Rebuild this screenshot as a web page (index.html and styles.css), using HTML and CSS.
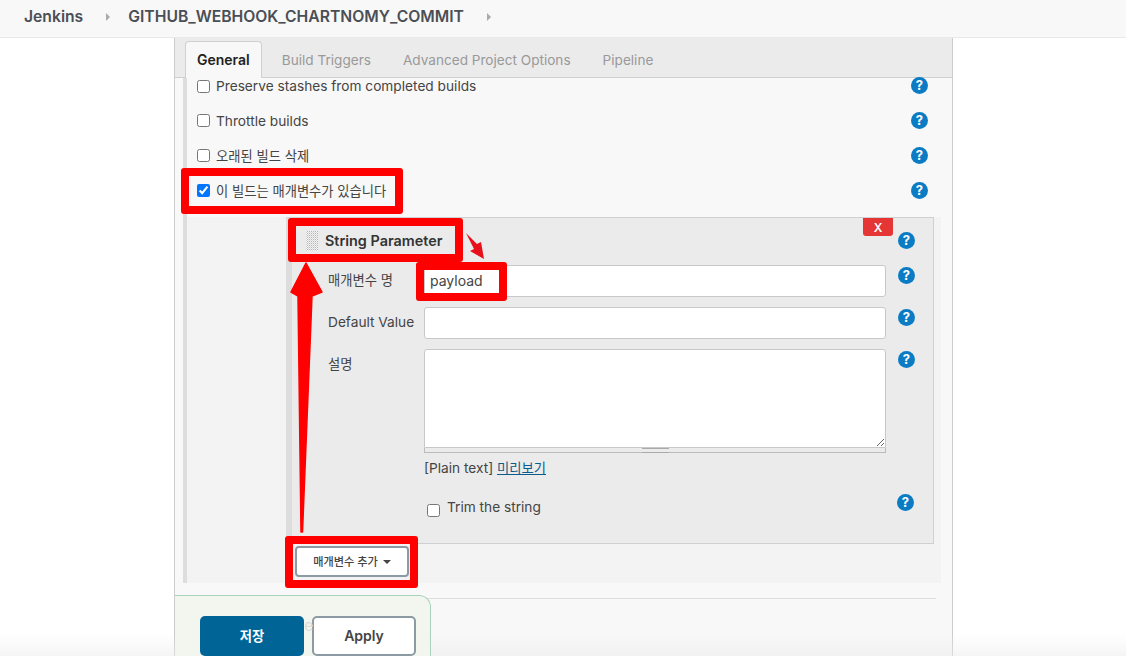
FILE: index.html
```html
<!DOCTYPE html>
<html lang="ko">
<head>
    <meta charset="UTF-8">
    <meta name="viewport" content="width=device-width, initial-scale=1.0">
    <title>GITHUB_WEBHOOK_CHARTNOMY_COMMIT Config</title>
    <link rel="stylesheet" href="styles.css">
</head>
<body>
    <header class="breadcrumb">
        <a class="crumb">Jenkins</a>
        <span class="crumb-arrow"></span>
        <a class="crumb">GITHUB_WEBHOOK_CHARTNOMY_COMMIT</a>
        <span class="crumb-arrow"></span>
    </header>

    <main class="panel">
        <nav class="tabs">
            <a class="tab active">General</a>
            <a class="tab">Build Triggers</a>
            <a class="tab">Advanced Project Options</a>
            <a class="tab">Pipeline</a>
        </nav>

        <section class="general">
            <div class="option">
                <label><input type="checkbox"> Preserve stashes from completed builds</label>
                <span class="help">?</span>
            </div>
            <div class="option">
                <label><input type="checkbox"> Throttle builds</label>
                <span class="help">?</span>
            </div>
            <div class="option">
                <label class="ko"><input type="checkbox"> 오래된 빌드 삭제</label>
                <span class="help">?</span>
            </div>
            <div class="option">
                <label class="ko"><input type="checkbox" checked> 이 빌드는 매개변수가 있습니다</label>
                <span class="help">?</span>
            </div>

            <div class="params">
                <div class="param-card">
                    <button class="delete" type="button">X</button>
                    <div class="param-head">
                        <span class="grip"></span>
                        <b>String Parameter</b>
                        <span class="help">?</span>
                    </div>
                    <div class="field">
                        <span class="field-label ko">매개변수 명</span>
                        <input class="text-input" type="text" value="payload">
                        <span class="help">?</span>
                    </div>
                    <div class="field">
                        <span class="field-label">Default Value</span>
                        <input class="text-input" type="text">
                        <span class="help">?</span>
                    </div>
                    <div class="field field-area">
                        <span class="field-label ko">설명</span>
                        <div class="area-wrap">
                            <textarea class="text-area"></textarea>
                            <div class="grippie"></div>
                        </div>
                        <span class="help">?</span>
                    </div>
                    <div class="preview">[Plain text] <a class="ko" href="#">미리보기</a></div>
                    <div class="trim">
                        <label><input type="checkbox"> Trim the string</label>
                        <span class="help">?</span>
                    </div>
                </div>
                <button class="add-param" type="button">매개변수 추가 <span class="caret"></span></button>
            </div>
        </section>

        <hr class="rule">

        <div class="actions">
            <button class="btn btn-save ko" type="button">저장</button>
            <button class="btn btn-apply" type="button">Apply</button>
        </div>
    </main>

    <!-- text showing through from behind the sticky bar -->
    <span class="ghost">e</span>

    <!-- annotations drawn on top of the screenshot -->
    <div class="mark mark-check"></div>
    <div class="mark mark-head"></div>
    <div class="mark mark-name"></div>
    <div class="mark mark-add"></div>
    <svg class="arrows" width="1126" height="656" viewBox="0 0 1126 656">
        <path d="M306 263 L322 292 L312 296 L302.5 532 L301 532 L298 296 L291 292 Z" fill="#f00" stroke="#f00" stroke-width="1.5" stroke-linejoin="round"/>
        <path d="M466 233 L477 244 L481 242 L484 259 L470 251 L474 249 Z" fill="#e8101a"/>
    </svg>
    <div class="page-fade"></div>
</body>
</html>
```

FILE: styles.css
```css
* {
    box-sizing: border-box;
}

html,
body {
    height: 656px;
    overflow: hidden;
}

body {
    position: relative;
    margin: 0;
    background: #fff;
    color: #333;
    font-family: Inter, "Noto Sans CJK KR", sans-serif;
    font-size: 13.7px;
}

.ko {
    font-size: 13.3px;
}

.breadcrumb {
    display: flex;
    align-items: center;
    height: 38px;
    padding: 0 0 4px 24px;
    background: #f8f8f8;
    border-bottom: 1px solid #e9e9e9;
}

.crumb {
    color: #4a4f55;
    font-weight: 600;
    font-size: 15.7px;
}

.crumb-arrow {
    width: 0;
    height: 0;
    margin: 0 18px 0 23px;
    border-left: 4px solid #aaa;
    border-top: 4px solid transparent;
    border-bottom: 4px solid transparent;
}

.panel {
    display: flex;
    flex-direction: column;
    width: 779px;
    height: 618px;
    margin-left: 174px;
    background: #f8f8f8;
    border-left: 1px solid #ccc;
    border-right: 1px solid #ccc;
}

.tabs {
    display: flex;
    flex: none;
    height: 40px;
    padding: 3px 0 0 10px;
    background: #ebebeb;
    border-bottom: 1px solid #d0d0d0;
}

.tab {
    height: 37px;
    padding: 11px 11px 0;
    margin-right: 10px;
    color: #999;
    font-size: 13.6px;
}

.tab.active {
    height: 37px;
    margin-right: 9px;
    padding-top: 9px;
    color: #222;
    font-size: 14px;
    font-weight: 600;
    background: #f8f8f8;
    border: 1px solid #d0d0d0;
    border-bottom: none;
    border-radius: 4px 4px 0 0;
}

.general {
    flex: none;
    width: 766px;
    height: 505px;
    margin-left: 8px;
    padding-left: 10px;
    border-left: 4px solid #ddd;
}

.option {
    display: flex;
    align-items: center;
    justify-content: space-between;
    width: 731px;
    height: 35px;
}

.option:first-child {
    height: 16px;
}

.option:first-child .help {
    margin-top: -2px;
}

.option:nth-child(2) {
    margin-top: 9px;
}

label {
    display: flex;
    align-items: center;
    gap: 6px;
    color: #444;
}

input[type="checkbox"] {
    width: 13px;
    height: 13px;
    margin: 0;
}

.help {
    display: inline-block;
    flex: none;
    width: 17px;
    height: 17px;
    color: #fff;
    background: #0b7cc4;
    border-radius: 50%;
    font-size: 13px;
    font-weight: 700;
    line-height: 17px;
    text-align: center;
}

.params {
    width: 754px;
    height: 366px;
    margin: 9px 0 0 -10px;
    padding: 0 7px 0 99px;
    background: #f3f3f3;
}

.param-card {
    position: relative;
    width: 648px;
    height: 327px;
    padding-left: 36px;
    background: #ebebeb;
    border: 1px solid #d0d0d0;
    border-left: 6px solid #ddd;
}

.delete {
    position: absolute;
    top: 0;
    right: 40px;
    width: 30px;
    height: 18px;
    padding: 0;
    color: #fff;
    background: #e53535;
    border: none;
    border-radius: 0 0 3px 3px;
    font-family: inherit;
    font-size: 12px;
    font-weight: 600;
}

.param-head {
    display: flex;
    align-items: center;
    height: 45px;
    margin-bottom: 2px;
    margin-left: -22px;
    padding-right: 18px;
}

.param-head b {
    flex: 1;
    margin-left: 7px;
    color: #333;
    font-weight: 600;
    font-size: 14.4px;
}

.grip {
    width: 12px;
    height: 20px;
    background: conic-gradient(#b4b4b4 25%, #f4f4f4 0 50%, #d8d8d8 0 75%, #f4f4f4 0) 0 0 / 2px 2px;
}

.field {
    display: flex;
    align-items: flex-start;
    height: 42px;
}

.field-label {
    width: 96px;
    padding-top: 7px;
    color: #444;
    line-height: 17px;
}

.text-input {
    width: 462px;
    height: 32px;
    padding: 0 5px 2px;
    color: #444;
    background: #fff;
    border: 1px solid #c8c8c8;
    border-radius: 3px;
    font-family: inherit;
    font-size: 14px;
}

.field .help {
    margin: 2px 0 0 12px;
}

.field-area {
    height: 104px;
}

.area-wrap {
    width: 462px;
}

.text-area {
    display: block;
    width: 462px;
    height: 99px;
    background: #fff;
    border: 1px solid #c8c8c8;
    border-radius: 3px 3px 0 0;
    font-family: inherit;
}

.grippie {
    position: relative;
    height: 5px;
    background: #ebebeb;
    border: 1px solid #bbb;
    border-top: none;
}

.grippie::after {
    content: "";
    position: absolute;
    top: 0;
    left: 217px;
    width: 27px;
    height: 3px;
    border-top: 1px solid #aaa;
    border-bottom: 1px solid #aaa;
}

.preview {
    margin: 5px 0 0 96px;
    color: #444;
}

.preview a {
    color: #0b5c8c;
}

.trim {
    display: flex;
    align-items: center;
    justify-content: space-between;
    height: 24px;
    margin: 18px 0 0 99px;
    padding-right: 19px;
}

.trim label {
    gap: 7px;
}

.trim .help {
    margin-top: -10px;
}

.trim input {
    margin-top: 6px;
}

.add-param {
    display: block;
    width: 114px;
    height: 31px;
    margin: 2px 0 0 9px;
    padding-bottom: 2px;
    color: #444;
    background: #fff;
    border: 2px solid #8c9aa3;
    border-radius: 4px;
    font-family: inherit;
    font-size: 11.2px;
    font-weight: 500;
}

.caret {
    display: inline-block;
    margin: 0 0 2px 2px;
    border-top: 4px solid #444;
    border-left: 4px solid transparent;
    border-right: 4px solid transparent;
}

.rule {
    flex: none;
    width: 749px;
    height: 1px;
    margin: 15px 0 0 12px;
    background: #ddd;
    border: none;
}

.actions {
    display: flex;
    gap: 8px;
    width: 256px;
    height: 70px;
    margin-top: -4px;
    padding: 20px 0 0 25px;
    background: #f2f6ef;
    border: 1px solid #a9d2bd;
    border-left: none;
    border-radius: 0 12px 0 0;
    z-index: 1;
}

.btn {
    width: 104px;
    height: 40px;
    padding-bottom: 2px;
    border-radius: 5px;
    font-family: inherit;
    font-size: 14px;
    font-weight: 600;
}

.btn-save {
    color: #fff;
    background: #006496;
    border: none;
    font-size: 13.3px;
}

.btn-apply {
    color: #444;
    background: #fff;
    border: 2px solid #8c9aa3;
}

.ghost {
    position: absolute;
    left: 304px;
    top: 615px;
    color: #dcdcdc;
    font-size: 16px;
    z-index: 1;
}

.mark {
    position: absolute;
    border: 8px solid #f00;
    border-radius: 3px;
}

.mark-check {
    left: 181px;
    top: 168px;
    width: 222px;
    height: 46px;
}

.mark-head {
    left: 288px;
    top: 218px;
    width: 175px;
    height: 44px;
}

.mark-name {
    left: 416px;
    top: 262px;
    width: 91px;
    height: 39px;
}

.mark-add {
    left: 285px;
    top: 536px;
    width: 133px;
    height: 52px;
}

.arrows {
    position: absolute;
    top: 0;
    left: 0;
}

.page-fade {
    position: absolute;
    left: 0;
    right: 0;
    bottom: 0;
    height: 22px;
    background: linear-gradient(rgba(235, 235, 235, 0), rgba(235, 235, 235, 0.5));
}
```
